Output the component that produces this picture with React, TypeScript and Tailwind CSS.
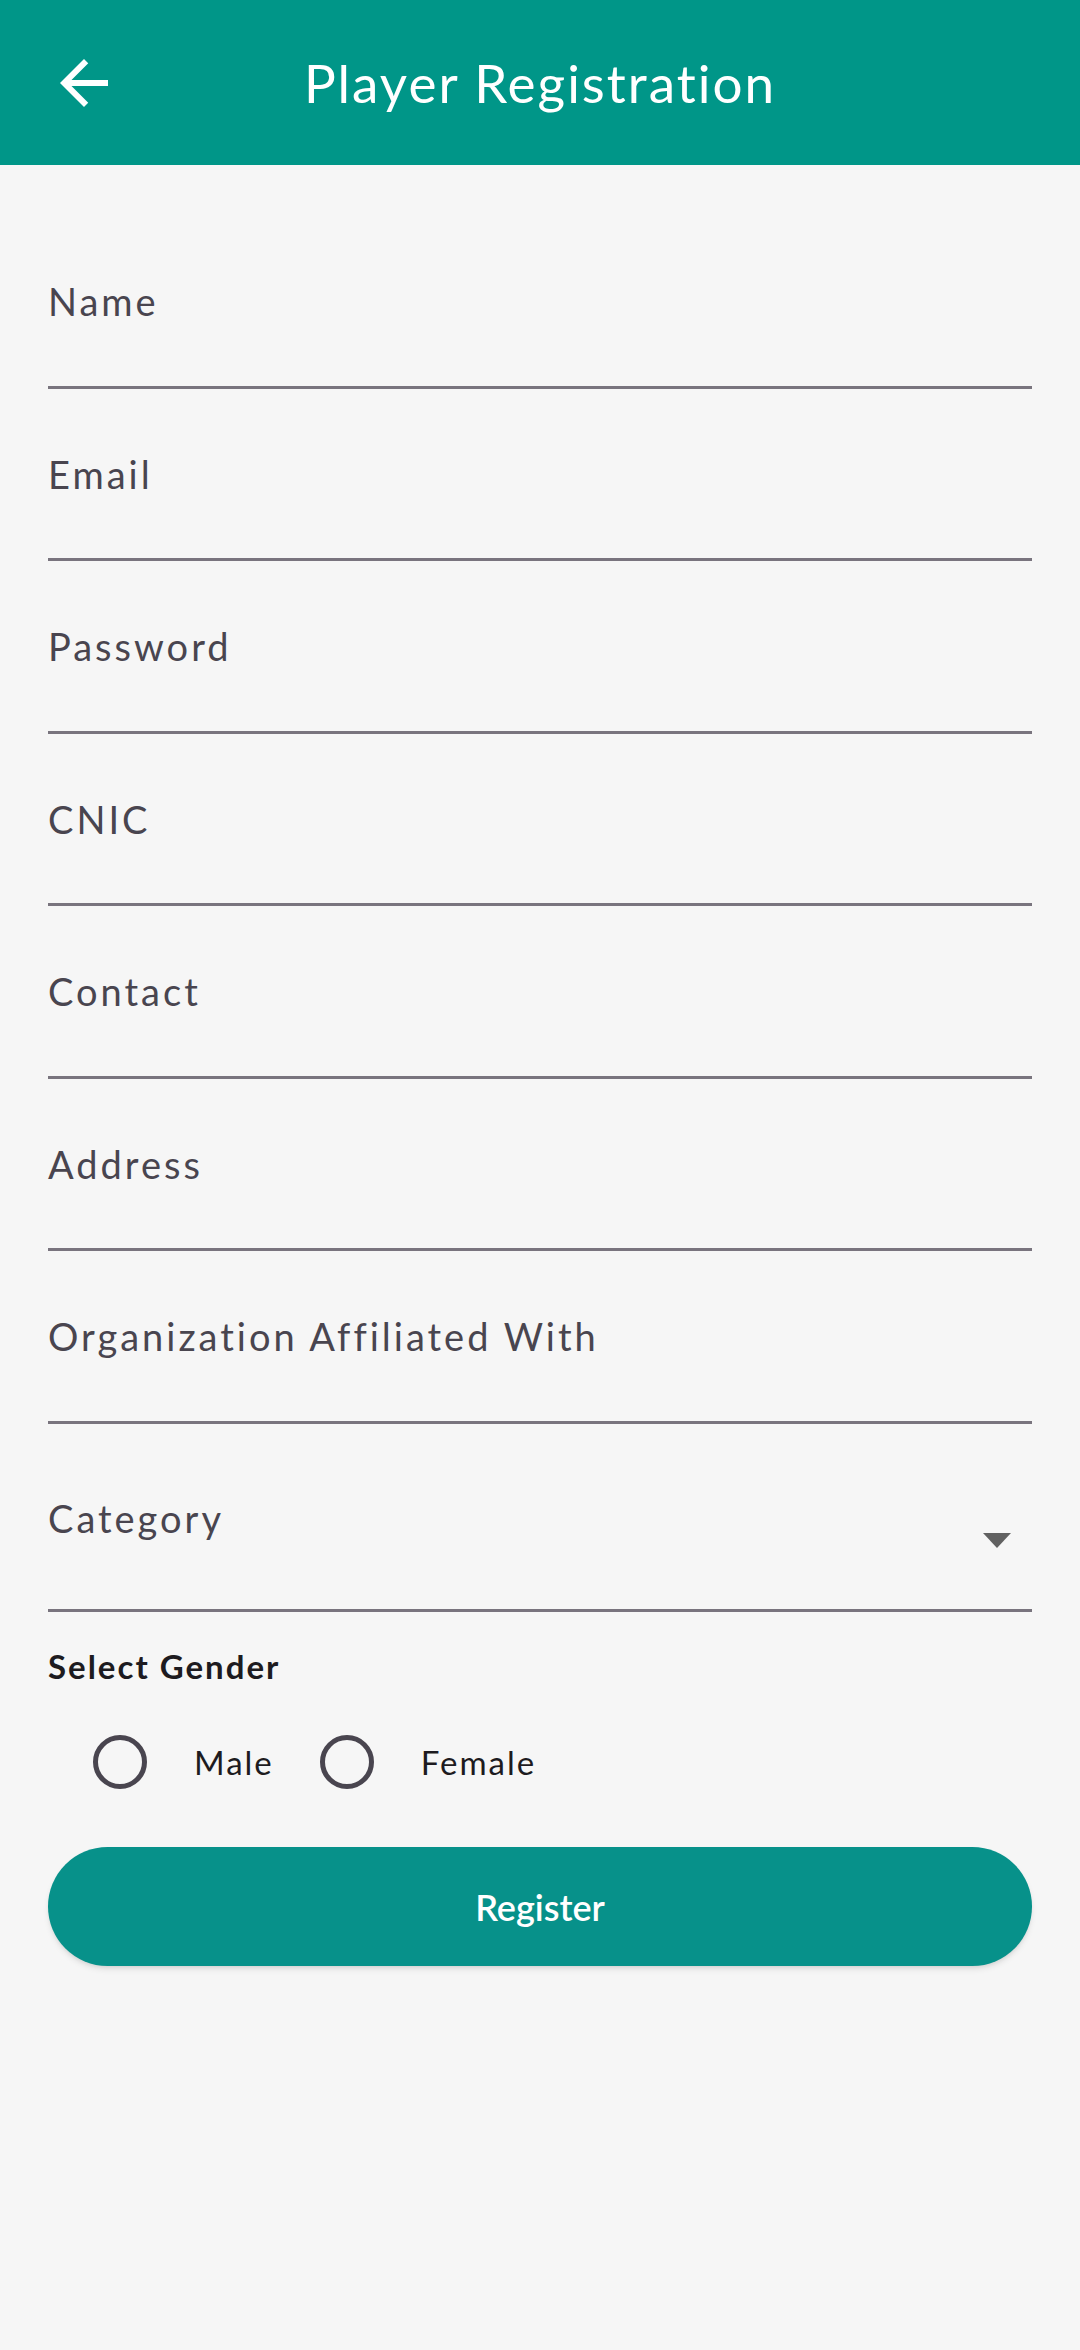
import React from "react";

const fields = [
  "Name",
  "Email",
  "Password",
  "CNIC",
  "Contact",
  "Address",
  "Organization Affiliated With",
];

function BackArrow() {
  return (
    <svg viewBox="0 0 24 24" className="h-[72px] w-[72px]" fill="#ffffff">
      <path d="M20 11H7.83l5.59-5.59L12 4l-8 8 8 8 1.41-1.41L7.83 13H20v-2z" />
    </svg>
  );
}

function Radio({ label }: { label: string }) {
  return (
    <div className="flex items-center">
      <div className="h-[54px] w-[54px] rounded-full border-[5px] border-[#49454f]" />
      <span className="ml-[47px] text-[33px] leading-none tracking-[2px] text-[#1d1b20]">
        {label}
      </span>
    </div>
  );
}

export default function App() {
  return (
    <div className="min-h-[2350px] w-[1080px] bg-[#f6f6f6] font-['Lato',sans-serif]">
      {/* App bar */}
      <header className="grid h-[165px] grid-cols-[1fr_auto_1fr] items-center bg-[#009688]">
        <div className="pl-[48px]">
          <BackArrow />
        </div>
        <h1 className="text-[53px] leading-none font-normal tracking-[2px] text-white">
          Player Registration
        </h1>
        <div />
      </header>

      <main className="px-[48px] pt-[51px]">
        {fields.map((label) => (
          <div
            key={label}
            className="box-border h-[172.5px] border-b-[3px] border-[#79747e] pt-[66px]"
          >
            <span className="text-[38px] leading-none tracking-[3px] text-[#49454f]">
              {label}
            </span>
          </div>
        ))}

        {/* Category dropdown */}
        <div className="box-border flex h-[188px] items-start justify-between border-b-[3px] border-[#79747e] pt-[75px] pr-[21px]">
          <span className="text-[38px] leading-none tracking-[3px] text-[#49454f]">
            Category
          </span>
          <div className="mt-[34.5px] h-0 w-0 border-t-[15px] border-r-[14.5px] border-l-[14.5px] border-t-[#616161] border-r-transparent border-l-transparent" />
        </div>

        <div className="mt-[38px] text-[33px] leading-none font-bold tracking-[2px] text-[#1d1b20]">
          Select Gender
        </div>

        <div className="mt-[52.5px] flex items-center gap-[46px] pl-[45px]">
          <Radio label="Male" />
          <Radio label="Female" />
        </div>

        <button className="mt-[58px] flex h-[119px] w-full items-center justify-center rounded-full bg-[#07918a] text-[36px] font-semibold text-white shadow-md">
          Register
        </button>
      </main>
    </div>
  );
}
